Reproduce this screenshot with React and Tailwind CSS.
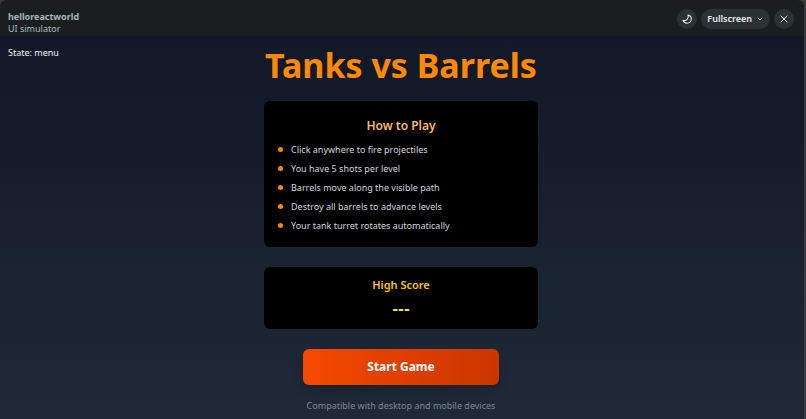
import { ChevronDown, X } from 'lucide-react'

const steps = [
  'Click anywhere to fire projectiles',
  'You have 5 shots per level',
  'Barrels move along the visible path',
  'Destroy all barrels to advance levels',
  'Your tank turret rotates automatically',
]

function MoonIcon() {
  return (
    <svg viewBox="0 0 12 12" className="size-3" fill="none" stroke="currentColor" strokeWidth="1.1" strokeLinejoin="round" aria-hidden="true">
      <path d="M7 2C8.900 2.400 10.300 4 10.300 6A4.200 4.200 0 0 1 6.100 10.200C4.200 10.200 2.500 9 1.900 7.200C3.200 7.900 5 7.600 6.100 6.400C7.300 5.200 7.600 3.400 7 2Z" />
    </svg>
  )
}

function Header() {
  return (
    <header className="flex h-9 items-center justify-between bg-[#1a1e1f] pt-0.5 pr-2.5 pl-2">
      <div className="pt-2 text-[9px] leading-3 text-[#a9b9c0]">
        <h2 className="font-bold">helloreactworld</h2>
        <p>UI simulator</p>
      </div>
      <div className="flex items-center gap-1 text-[#e8eaeb]">
        <button type="button" aria-label="Dark mode" className="flex size-5 items-center justify-center rounded-full bg-[#2c3133]">
          <MoonIcon />
        </button>
        <button type="button" className="flex h-5 items-center gap-1 rounded-full bg-[#2c3133] px-1.5 text-[9px] font-semibold">
          Fullscreen
          <ChevronDown className="size-2" strokeWidth={3} />
        </button>
        <button type="button" aria-label="Close" className="flex size-5 items-center justify-center rounded-full bg-[#2c3133]">
          <X className="size-3" strokeWidth={2} />
        </button>
      </div>
    </header>
  )
}

export default function App() {
  return (
    <div className="min-h-screen bg-[#3b3b3c] pr-0.5 font-['Noto_Sans',sans-serif]">
      <div className="flex min-h-screen flex-col overflow-hidden rounded-t-md">
        <Header />
        <main className="relative flex grow flex-col items-center bg-linear-to-b from-[#111827] to-[#1f2937] pt-2 pr-0.5">
          {/* Debug state */}
          <p className="absolute top-2 left-2 text-[9px] leading-[18px] text-gray-100">State: menu</p>

          <h1 className="text-[34px] leading-[42px] font-bold text-[#ff8904]">Tanks vs Barrels</h1>

          {/* Instructions */}
          <section className="mt-[15px] w-[274px] rounded-md bg-black px-3.5 pt-4 pb-3">
            <h2 className="text-center text-xs leading-[18px] font-semibold text-[#ffb86a]">How to Play</h2>
            <ul className="mt-[5px] text-[9px] leading-[19px] text-gray-300">
              {steps.map((step) => (
                <li key={step} className="flex items-center gap-2">
                  <span className="size-[5px] rounded-full bg-[#ff8904]" />
                  {step}
                </li>
              ))}
            </ul>
          </section>

          {/* High score */}
          <section className="mt-5 w-[274px] rounded-md bg-black pt-2.5 pb-3 text-center">
            <h2 className="text-[11px] leading-4 font-semibold text-[#fdc700]">High Score</h2>
            <p className="mt-2 font-['DejaVu_Sans',sans-serif] text-sm leading-4 font-bold text-[#ffe14d]">---</p>
          </section>

          <button
            type="button"
            className="mt-5 h-9 w-[196px] rounded-md bg-linear-to-r from-[#f54900] to-[#ca3500] text-xs font-bold text-white shadow-lg"
          >
            Start Game
          </button>

          <p className="mt-3 text-[9px] leading-[18px] text-[#7e8794]">Compatible with desktop and mobile devices</p>
        </main>
      </div>
    </div>
  )
}
